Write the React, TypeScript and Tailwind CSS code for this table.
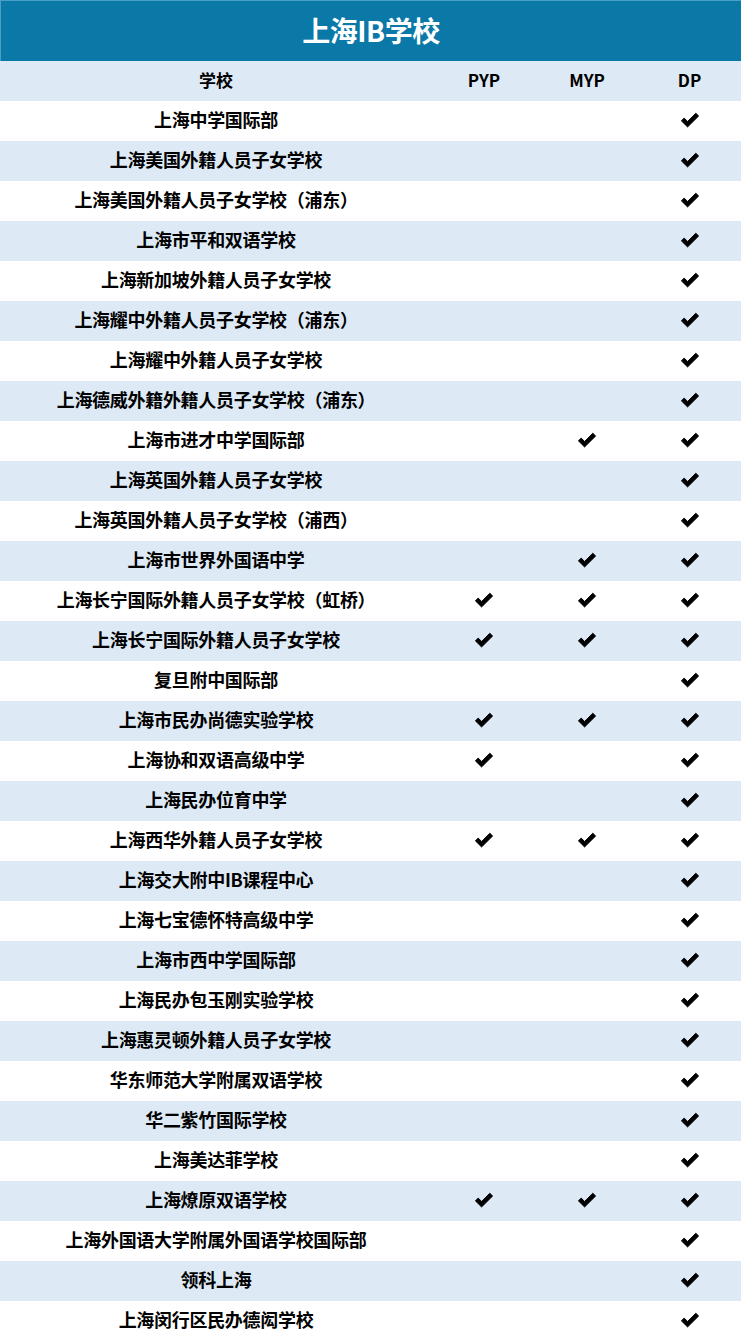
import React from "react";

type Row = [string, boolean, boolean, boolean];

const rows: Row[] = [
  ["上海中学国际部", false, false, true],
  ["上海美国外籍人员子女学校", false, false, true],
  ["上海美国外籍人员子女学校（浦东）", false, false, true],
  ["上海市平和双语学校", false, false, true],
  ["上海新加坡外籍人员子女学校", false, false, true],
  ["上海耀中外籍人员子女学校（浦东）", false, false, true],
  ["上海耀中外籍人员子女学校", false, false, true],
  ["上海德威外籍外籍人员子女学校（浦东）", false, false, true],
  ["上海市进才中学国际部", false, true, true],
  ["上海英国外籍人员子女学校", false, false, true],
  ["上海英国外籍人员子女学校（浦西）", false, false, true],
  ["上海市世界外国语中学", false, true, true],
  ["上海长宁国际外籍人员子女学校（虹桥）", true, true, true],
  ["上海长宁国际外籍人员子女学校", true, true, true],
  ["复旦附中国际部", false, false, true],
  ["上海市民办尚德实验学校", true, true, true],
  ["上海协和双语高级中学", true, false, true],
  ["上海民办位育中学", false, false, true],
  ["上海西华外籍人员子女学校", true, true, true],
  ["上海交大附中IB课程中心", false, false, true],
  ["上海七宝德怀特高级中学", false, false, true],
  ["上海市西中学国际部", false, false, true],
  ["上海民办包玉刚实验学校", false, false, true],
  ["上海惠灵顿外籍人员子女学校", false, false, true],
  ["华东师范大学附属双语学校", false, false, true],
  ["华二紫竹国际学校", false, false, true],
  ["上海美达菲学校", false, false, true],
  ["上海燎原双语学校", true, true, true],
  ["上海外国语大学附属外国语学校国际部", false, false, true],
  ["领科上海", false, false, true],
  ["上海闵行区民办德闳学校", false, false, true],
];

function Check() {
  return (
    <svg width="20" height="16" viewBox="0 0 19 15" className="-mt-[2px]">
      <path
        d="M1.3 8.3 L4 5.7 L7.2 8.9 L15 1.1 L17.7 3.7 L7.2 14.1 Z"
        fill="#000"
        stroke="#000"
        strokeWidth="0.9"
        strokeLinejoin="round"
      />
    </svg>
  );
}

function Cell({ on }: { on: boolean }) {
  return <div className="flex items-center justify-center">{on ? <Check /> : null}</div>;
}

export default function App() {
  return (
    <div
      className="w-[741px] bg-white text-black"
      style={{ fontFamily: '"Noto Sans CJK SC", "Noto Sans", sans-serif' }}
    >
      <div className="h-[61px] bg-[#0b79a8] flex items-center justify-center border-t border-l border-[#4a9fc4] pb-[3px]">
        <span className="text-white font-bold text-[28px] tracking-[-0.5px]">上海IB学校</span>
      </div>
      <div className="grid grid-cols-[432px_104px_102px_103px] h-[40px] bg-[#ddeaf6] font-bold text-[17px] items-center pb-[2px]">
        <div className="text-center">学校</div>
        <div className="text-center">PYP</div>
        <div className="text-center">MYP</div>
        <div className="text-center">DP</div>
      </div>
      {rows.map((r, i) => (
        <div
          key={i}
          className={
            "grid grid-cols-[432px_104px_102px_103px] h-[40px] items-center font-bold text-[18px] " +
            (i % 2 === 1 ? "bg-[#ddeaf6]" : "bg-white")
          }
        >
          <div className="text-center tracking-[-0.3px] whitespace-nowrap pb-[3px]">{r[0]}</div>
          <Cell on={r[1]} />
          <Cell on={r[2]} />
          <Cell on={r[3]} />
        </div>
      ))}
    </div>
  );
}
